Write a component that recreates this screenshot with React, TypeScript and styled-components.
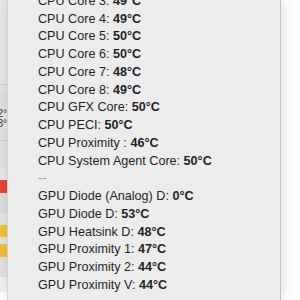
import React from "react";
import styled, { createGlobalStyle } from "styled-components";

const Global = createGlobalStyle`
  html, body { margin: 0; padding: 0; background: #ffffff; }
  body { width: 300px; height: 300px; overflow: hidden; }
`;

const Page = styled.div`
  width: 300px;
  height: 300px;
  display: flex;
  overflow: hidden;
  background: #ffffff;
  font-family: "Liberation Sans", Arial, sans-serif;
`;

const Strip = styled.div`
  width: 7px;
  flex: none;
  display: flex;
  flex-direction: column;
  overflow: hidden;
`;

const Block = styled.div<{ $h: number; $bg: string; $line?: boolean }>`
  height: ${(p) => p.$h}px;
  flex: none;
  background: ${(p) => p.$bg};
  border-bottom: ${(p) => (p.$line ? "1px solid #cfcfcf" : "none")};
  display: flex;
  justify-content: flex-end;
  align-items: center;
  overflow: hidden;
  font-size: 10px;
  color: #333;
  white-space: nowrap;
`;

const Menu = styled.div`
  width: 272px;
  flex: none;
  height: 300px;
  background: #ececec;
  border-left: 1px solid #d4d4d4;
  border-right: 1px solid #c4c4c4;
  box-shadow: 2px 0 14px rgba(0, 0, 0, 0.14);
  overflow: hidden;
  position: relative;
  z-index: 1;
`;

const List = styled.div`
  margin-top: -7.2px;
  padding-left: 30px;
  display: flex;
  flex-direction: column;
`;

const Row = styled.div<{ $muted?: boolean }>`
  height: 17.75px;
  line-height: 17.75px;
  font-size: 12.6px;
  color: ${(p) => (p.$muted ? "#9a9a9a" : "#1f1f1f")};
  white-space: nowrap;
`;

const Value = styled.b`
  font-weight: 700;
`;

const rows: Array<[string, string] | null> = [
  ["CPU Core 3: ", "49°C"],
  ["CPU Core 4: ", "49°C"],
  ["CPU Core 5: ", "50°C"],
  ["CPU Core 6: ", "50°C"],
  ["CPU Core 7: ", "48°C"],
  ["CPU Core 8: ", "49°C"],
  ["CPU GFX Core: ", "50°C"],
  ["CPU PECI: ", "50°C"],
  ["CPU Proximity : ", "46°C"],
  ["CPU System Agent Core: ", "50°C"],
  null,
  ["GPU Diode (Analog) D: ", "0°C"],
  ["GPU Diode D: ", "53°C"],
  ["GPU Heatsink D: ", "48°C"],
  ["GPU Proximity 1: ", "47°C"],
  ["GPU Proximity 2: ", "44°C"],
  ["GPU Proximity V: ", "44°C"],
];

export default function App() {
  return (
    <>
      <Global />
      <Page>
        <Strip>
          <Block $h={84} $bg="#e9e9e9" $line />
          <Block $h={8} $bg="#e4e4e4" />
          <Block $h={15} $bg="#dedede" />
          <Block $h={10} $bg="#e6e6e6">42°</Block>
          <Block $h={10} $bg="#e6e6e6">48°</Block>
          <Block $h={12} $bg="#e2e2e2" $line />
          <Block $h={28} $bg="#e4e4e4" />
          <Block $h={11} $bg="#e9e9e9" />
          <Block $h={13} $bg="#e0453a" />
          <Block $h={20} $bg="#dddddd" />
          <Block $h={12} $bg="#e6e6e6" />
          <Block $h={12} $bg="#eec23a" />
          <Block $h={7} $bg="#e4e4e4" />
          <Block $h={13} $bg="#eec23a" />
          <Block $h={20} $bg="#e2e2e2" />
          <Block $h={15} $bg="#f2f2f2" />
        </Strip>
        <Menu>
          <List>
            {rows.map((r, i) =>
              r ? (
                <Row key={i}>
                  {r[0]}
                  <Value>{r[1]}</Value>
                </Row>
              ) : (
                <Row key={i} $muted>
                  --
                </Row>
              )
            )}
          </List>
        </Menu>
      </Page>
    </>
  );
}
